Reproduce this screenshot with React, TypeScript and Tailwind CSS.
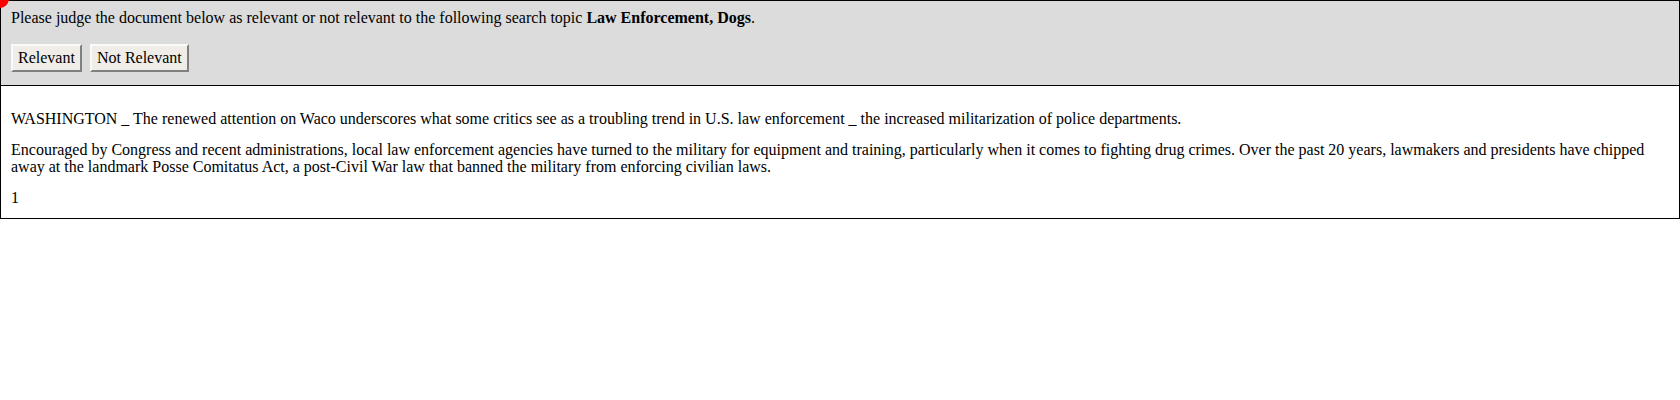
export default function App() {
  const serif = { fontFamily: '"Liberation Serif", "Times New Roman", serif' }
  return (
    <div className="relative w-full text-[16px] text-black" style={serif}>
      <span className="absolute -left-[10px] -top-[11px] w-[19px] h-[19px] rounded-full bg-[#ff0000]" />

      <div className="bg-[#dcdcdc] border border-black px-[10px] pt-[8px] pb-[13px] leading-[18px]">
        <p>
          Please judge the document below as relevant or not relevant to the following search topic{' '}
          <b>Law Enforcement, Dogs</b>.
        </p>
        <div className="flex gap-[8px] mt-[17px]">
          <button className="bg-[#f0ede8] border-2 border-t-[#fafafa] border-l-[#fafafa] border-r-[#808080] border-b-[#808080] px-[5px] h-[28px] leading-[18px]">
            Relevant
          </button>
          <button className="bg-[#f0ede8] border-2 border-t-[#fafafa] border-l-[#fafafa] border-r-[#808080] border-b-[#808080] px-[5px] h-[28px] leading-[18px]">
            Not Relevant
          </button>
        </div>
      </div>

      <div className="border border-t-0 border-black px-[10px] pt-[16px] pb-[4px] leading-[17px]">
        <p className="my-[8px]">
          WASHINGTON _ The renewed attention on Waco underscores what some critics see as a troubling trend in U.S. law
          enforcement _ the increased militarization of police departments.
        </p>
        <p className="my-[14px]">
          Encouraged by Congress and recent administrations, local law enforcement agencies have turned to the military
          for equipment and training, particularly when it comes to fighting drug crimes. Over the past 20 years,
          lawmakers and presidents have chipped away at the landmark Posse Comitatus Act, a post-Civil War law that
          banned the military from enforcing civilian laws.
        </p>
        <p className="my-[8px]">1</p>
      </div>
    </div>
  )
}
